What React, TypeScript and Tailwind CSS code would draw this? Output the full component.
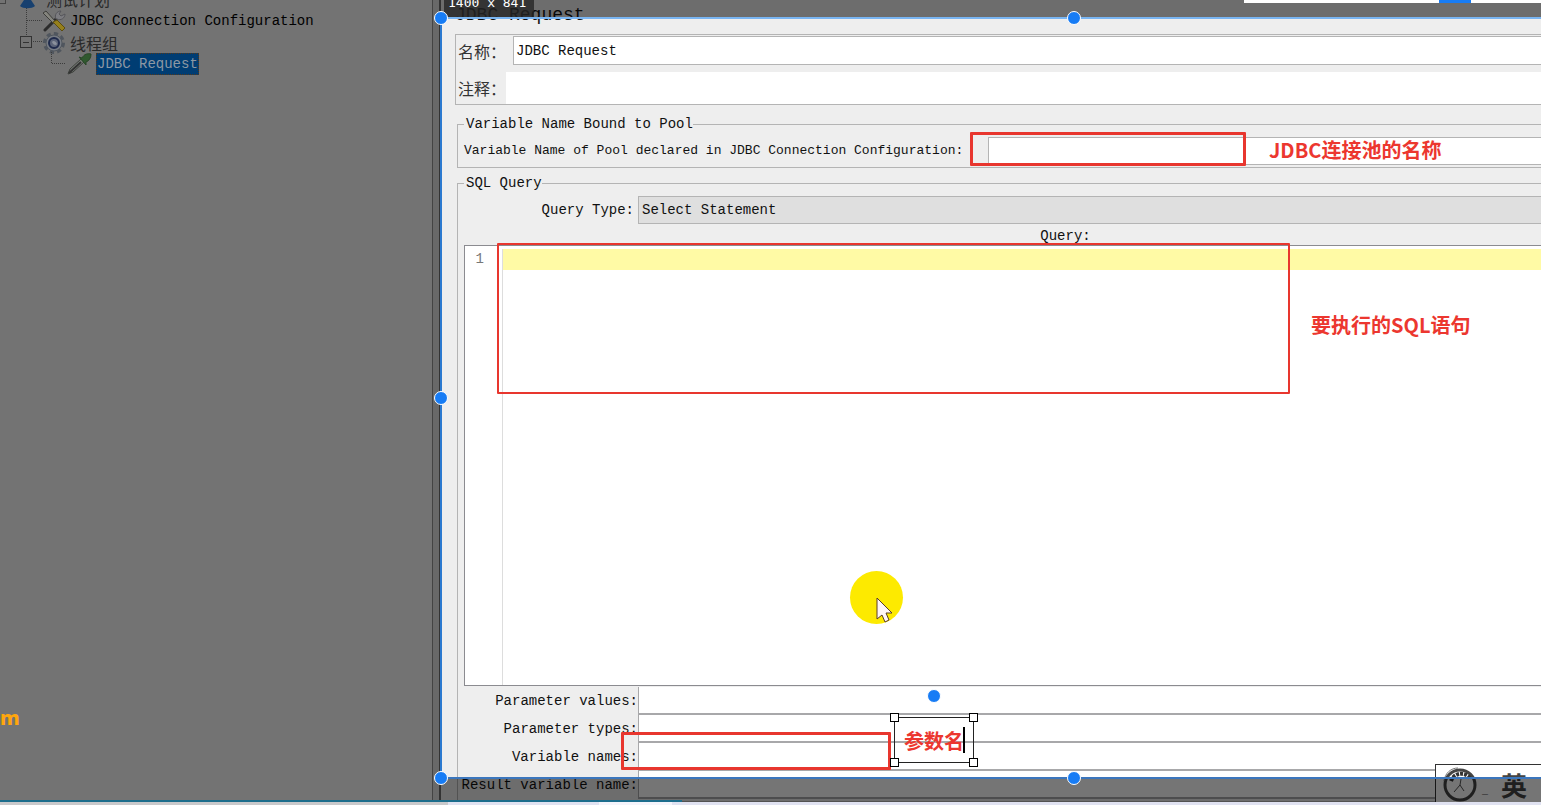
import type { ReactNode } from "react";

const parameterRows = [
  { id: "parameter-values", label: "Parameter values:" },
  { id: "parameter-types", label: "Parameter types:" },
  { id: "variable-names", label: "Variable names:" },
  { id: "result-variable-name", label: "Result variable name:" },
];

function ToolsIcon() {
  return (
    <svg width="24" height="22" viewBox="0 0 24 22" fill="none">
      <path d="M3 20 L15 8" stroke="#2c2c2c" strokeWidth="3" strokeLinecap="round" />
      <path d="M14 9 C12 5 15 1 19 1 L17 4 L19 6 L23 4 C23 8 19 11 15 9 Z" fill="#7c7c80" stroke="#55555a" strokeWidth="1" />
      <path d="M1 3 L4 1 L13 11 L11 13 Z" fill="#85857e" stroke="#3d3d3a" strokeWidth="1" />
      <path d="M11 12 L15 10 L23 18 L20 21 Z" fill="#96801c" stroke="#5c4d10" strokeWidth="1" />
    </svg>
  );
}

function GearIcon() {
  return (
    <svg width="24" height="22" viewBox="0 0 24 22" fill="none">
      <circle cx="12" cy="11" r="9" stroke="#50565e" strokeWidth="4" strokeDasharray="4 3" />
      <circle cx="12" cy="11" r="8" fill="#767b83" stroke="#50565e" />
      <circle cx="12" cy="11" r="5" fill="#5c6478" stroke="#1f2a4b" strokeWidth="2" />
      <path d="M10 10 C11 8 14 9 15 12 C14 14 11 13 10 10 Z" fill="#8b919c" />
    </svg>
  );
}

function DropperIcon() {
  return (
    <svg width="26" height="22" viewBox="0 0 26 22" fill="none">
      <path d="M2 21 L4 16 L15 6 L18 9 L7 19 Z" fill="#777b76" stroke="#3c403b" strokeWidth="1" />
      <path d="M3 20 L15 9" stroke="#333" strokeWidth="2" />
      <path d="M13 4 L16 5 C18 1 22 0 25 1 C25 5 23 8 20 9 L20 12 Z" fill="#30592f" stroke="#294628" strokeWidth="1" />
    </svg>
  );
}

function GaugeIcon() {
  return (
    <svg width="36" height="36" viewBox="0 0 36 36" fill="none">
      <circle cx="18" cy="18" r="15" stroke="#444" strokeWidth="3" />
      <path d="M9 14 A11 11 0 0 1 28 11" stroke="#333" strokeWidth="4" strokeDasharray="3 1" />
      <path d="M2 14 C3 6 9 1 16 1" stroke="#777" strokeWidth="1" />
      <path d="M12 25 L18 18 L19 12 M18 18 L22 24" stroke="#555" strokeWidth="1" />
    </svg>
  );
}

function TestPlanTree() {
  return (
    <aside className="relative w-[432px] shrink-0 overflow-hidden bg-[#737373]">
      <svg className="absolute left-0 top-0" width="70" height="80" fill="none" shapeRendering="crispEdges">
        <path d="M26.5 8 V36 M26.5 20.5 H42 M33 41.5 H42 M51.5 52 V63.5 H66" stroke="#3c3c3c" strokeDasharray="1 1" />
        <path d="M0 3.5 H5.5 V0" stroke="#444" />
        <path d="M20.5 36.5 H31.5 V47.5 H20.5 Z M23 42 H29" stroke="#333" />
      </svg>
      <svg className="absolute left-5 top-0" width="16" height="9">
        <path d="M4 0 H11 L15 6 C12 9 3 9 0 6 Z" fill="#17406f" />
      </svg>
      <ul className="-mt-3 text-black">
        <li className="flex h-[22px] items-center pl-[46px] font-['Noto_Sans_CJK_SC',sans-serif] text-[16px] text-[#2a2a2a]">
          测试计划
        </li>
        <li className="flex h-[22px] items-center gap-1 pl-[42px]">
          <ToolsIcon />
          <span className="whitespace-nowrap">JDBC Connection Configuration</span>
        </li>
        <li className="flex h-[21px] items-center gap-1 pl-[42px]">
          <GearIcon />
          <span className="font-['Noto_Sans_CJK_SC',sans-serif] text-[16px] leading-4 text-[#2a2a2a]">线程组</span>
        </li>
        <li className="flex h-[22px] items-center gap-1 pl-[66px]">
          <DropperIcon />
          <span className="border border-dotted border-[#53381c] bg-[#003d73] leading-5 text-[#8d98a3]">
            JDBC Request
          </span>
        </li>
      </ul>
      <span className="absolute bottom-[72px] left-0 font-['Noto_Sans',sans-serif] text-[20px] leading-6 font-extrabold text-[#ffa60c]">
        m
      </span>
    </aside>
  );
}

function Group({ title, className, children }: { title: string; className: string; children: ReactNode }) {
  return (
    <fieldset className={`min-w-0 border border-r-0 border-[#b4b4b4] ${className}`}>
      <legend className="ml-1.5 pl-0.5 leading-[14px]">{title}</legend>
      {children}
    </fieldset>
  );
}

function RequestForm() {
  return (
    <form className="flex min-w-0 flex-1 flex-col bg-[#eee] pl-3.5 text-[#111]">
      <h1 className="h-[34px] pt-1 text-[18px] leading-[22px]">JDBC Request</h1>

      <div className="flex h-[71px] flex-col justify-between border border-r-0 border-[#b4b4b4] pt-px">
        <div className="flex h-[29px] items-center">
          <label htmlFor="name" className="w-[57px] pl-0.5 font-['Noto_Sans_CJK_SC',sans-serif] text-[16px] leading-4 text-[#333]">
            名称：
          </label>
          <input
            id="name"
            defaultValue="JDBC Request"
            className="h-full min-w-0 flex-1 border border-r-0 border-[#b4b4b4] bg-white px-0.5 outline-none"
          />
        </div>
        <div className="flex h-8 items-center">
          <label htmlFor="comment" className="w-[50px] pl-0.5 font-['Noto_Sans_CJK_SC',sans-serif] text-[16px] leading-4 text-[#333]">
            注释：
          </label>
          <input id="comment" className="h-full min-w-0 flex-1 bg-white outline-none" />
        </div>
      </div>

      <Group title="Variable Name Bound to Pool" className="ml-0.5 mt-3 h-[51px]">
        <div className="mt-1.5 flex h-7 items-center pl-1.5">
          <label htmlFor="pool" className="w-[524px] shrink-0 whitespace-nowrap text-[13px]">
            Variable Name of Pool declared in JDBC Connection Configuration:
          </label>
          <input id="pool" className="h-full min-w-0 flex-1 border border-r-0 border-[#b4b4b4] bg-white outline-none" />
        </div>
      </Group>

      <Group title="SQL Query" className="ml-0.5 mt-2 flex-1">
        <div className="flex h-full flex-col pl-1.5">
          <div className="mt-1.5 flex h-7 shrink-0 items-center">
            <label htmlFor="query-type" className="w-[174px] shrink-0 pr-1 text-right">
              Query Type:
            </label>
            <select
              id="query-type"
              className="h-full min-w-0 flex-1 appearance-none border border-r-0 border-[#b4b4b4] bg-[#dfdfdf] px-[3px] outline-none"
            >
              <option>Select Statement</option>
            </select>
          </div>
          <label htmlFor="query" className="h-[21px] shrink-0 pl-[126px] text-center leading-6">
            Query:
          </label>
          <div className="flex min-h-40 flex-1 border border-r-0 border-[#8b8b90] bg-white pt-[3px]">
            <div className="w-[38px] shrink-0 border-r border-[#ddd] pr-[18px] text-right leading-5 text-[#777]">1</div>
            <textarea
              id="query"
              className="min-w-0 flex-1 resize-none bg-[linear-gradient(#fffaa5,#fffaa5)] bg-[length:100%_21px] bg-no-repeat outline-none"
            />
          </div>
          <div className="h-[115px] shrink-0 pt-px">
            {parameterRows.map(({ id, label }) => (
              <div key={id} className="flex h-7 items-center">
                <label htmlFor={id} className="flex w-[174px] shrink-0 justify-end whitespace-nowrap">
                  {label}
                </label>
                <input
                  id={id}
                  className="h-full min-w-0 flex-1 border-b-2 border-l border-[#a8a8aa] bg-white outline-none"
                />
              </div>
            ))}
          </div>
        </div>
      </Group>
    </form>
  );
}

function InputMethodBar() {
  return (
    <div className="absolute bottom-[3px] right-0 flex h-[38px] w-[106px] items-center border border-r-0 border-b-0 border-[#333] bg-white pl-1.5 pt-0.5">
      <GaugeIcon />
      <span className="w-[23px] self-end pl-1 text-[10px] text-[#555]">_</span>
      <span className="font-['Noto_Sans_CJK_SC',sans-serif] text-[26px] leading-8 font-bold text-[#444]">英</span>
    </div>
  );
}

function Handle({ className }: { className: string }) {
  return <span className={`absolute size-3.5 rounded-full border border-white bg-[#177cf5] ${className}`} />;
}

function CaptureOverlay() {
  return (
    <>
      <div className="absolute left-[441px] right-0 top-0 h-[17px] bg-black/54" />
      <div className="absolute bottom-[3px] left-[441px] right-0 h-6 bg-black/54" />
      <div className="absolute bottom-[26px] left-[440px] right-0 top-[17px] border-y-2 border-l-2 border-b-[#3b76bd] border-l-[#2c7ad0] border-t-[#79b5f2]" />
      <div className="absolute left-[444px] top-0 h-[17px] w-[90px] overflow-hidden bg-[#262626]/80 pl-1 font-['DejaVu_Sans_Mono',monospace] text-[13px] text-white">
        <span className="-mt-1.5 block leading-[18px]">1400 x 841</span>
      </div>
      <div className="absolute right-0 top-0 h-[3px] w-[297px] bg-white">
        <div className="ml-[195px] h-full w-8 bg-[#177cf5]" />
      </div>
      <Handle className="left-[434px] top-[11px]" />
      <Handle className="left-[1067px] top-[11px]" />
      <Handle className="left-[434px] top-[391px]" />
      <Handle className="left-[434px] top-[771px]" />
      <Handle className="left-[1067px] top-[771px]" />
    </>
  );
}

function Annotations() {
  return (
    <div className="font-['Noto_Sans_CJK_SC',sans-serif] text-[20px] font-bold text-[#ec372f]">
      <div className="absolute left-[970px] top-[132px] h-[34px] w-[276px] rounded-[1px] border-[3px] border-[#e8362e]" />
      <div className="absolute left-[497px] top-[243px] h-[151px] w-[793px] rounded-[1px] border-2 border-[#e8362e]" />
      <div className="absolute left-[621px] top-[732px] h-[38px] w-[270px] rounded-[1px] border-[3px] border-[#e8362e]" />
      <span className="absolute left-[1269px] top-[136px] whitespace-nowrap leading-7">JDBC连接池的名称</span>
      <span className="absolute left-[1311px] top-[311px] whitespace-nowrap leading-7">要执行的SQL语句</span>

      <div className="absolute left-[894px] top-[717px] h-[46px] w-20 border border-[#222]">
        <input
          aria-label="Annotation text"
          defaultValue="参数名"
          className="h-full w-full bg-transparent pl-[9px] outline-none"
        />
        <span className="absolute left-[68px] top-[9px] h-[26px] w-0.5 bg-black" />
        <span className="absolute -left-[5px] -top-[5px] size-[9px] border border-black bg-white" />
        <span className="absolute -right-[5px] -top-[5px] size-[9px] border border-black bg-white" />
        <span className="absolute -bottom-[5px] -left-[5px] size-[9px] border border-black bg-white" />
        <span className="absolute -bottom-[5px] -right-[5px] size-[9px] border border-black bg-white" />
      </div>
      <Handle className="left-[927px] top-[689px]" />
    </div>
  );
}

function Pointer() {
  return (
    <div className="absolute left-[850px] top-[571px] size-[53px] rounded-full bg-[#fdea00]">
      <svg className="absolute left-[26px] top-[26px]" width="18" height="27" viewBox="0 0 18 27">
        <path d="M1 1 V22 L6 18 L9 25 L13 23 L10 16 H16 Z" fill="#fff6f6" stroke="#5a3c28" />
      </svg>
    </div>
  );
}

export default function App() {
  return (
    <div className="relative flex h-screen flex-col overflow-hidden bg-[#eee] font-['Liberation_Mono','Noto_Sans_CJK_SC',monospace] text-[14px] leading-5">
      <main className="flex min-h-0 flex-1">
        <TestPlanTree />
        <div className="w-[9px] shrink-0 border-l border-r-2 border-l-[#444] border-r-[#333] bg-[#696969]" />
        <RequestForm />
      </main>
      <div className="flex h-[3px] shrink-0 bg-[#e0e2f1]">
        <div className="w-[448px] bg-[#c9c9cb]" />
        <div className="ml-[151px] w-[73px] bg-[#f4f4fb]" />
      </div>
      <InputMethodBar />
      <CaptureOverlay />
      <div className="absolute bottom-[3px] left-0 h-0.5 w-[682px] bg-[#1c6d8c]" />
      <Annotations />
      <Pointer />
    </div>
  );
}
